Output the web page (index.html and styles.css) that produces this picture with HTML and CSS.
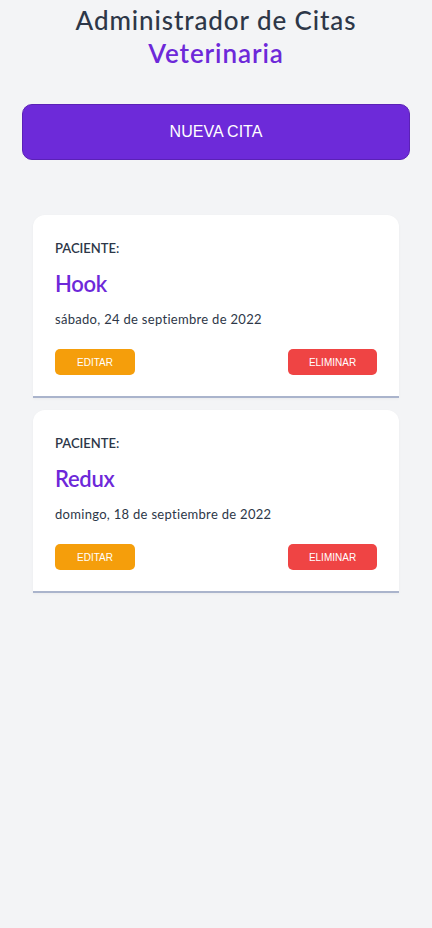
FILE: index.html
```html
<!DOCTYPE html>
<html lang="es">
<head>
<meta charset="utf-8">
<title>Administrador de Citas</title>
<link rel="stylesheet" href="styles.css">
</head>
<body>
<header class="header">
  <h1 class="title">Administrador de Citas <span class="title-accent">Veterinaria</span></h1>
</header>
<main class="main">
  <button class="new-btn" type="button">NUEVA CITA</button>
  <section class="list">
    <article class="card">
      <p class="label">PACIENTE:</p>
      <h2 class="name">Hook</h2>
      <p class="date">sábado, 24 de septiembre de 2022</p>
      <div class="actions">
        <button class="btn btn-edit" type="button">EDITAR</button>
        <button class="btn btn-delete" type="button">ELIMINAR</button>
      </div>
    </article>
    <article class="card">
      <p class="label">PACIENTE:</p>
      <h2 class="name">Redux</h2>
      <p class="date">domingo, 18 de septiembre de 2022</p>
      <div class="actions">
        <button class="btn btn-edit" type="button">EDITAR</button>
        <button class="btn btn-delete" type="button">ELIMINAR</button>
      </div>
    </article>
  </section>
</main>
</body>
</html>
```

FILE: styles.css
```css
* { box-sizing: border-box; }
html, body { margin: 0; padding: 0; }
body {
  background: #f3f4f6;
  font-family: "Lato", "Noto Sans", sans-serif;
  color: #374151;
  min-height: 928px;
}
.header {
  padding-top: 4px;
  text-align: center;
}
.title {
  margin: 0 auto;
  width: 320px;
  font-size: 26px;
  font-weight: 500;
  line-height: 33px;
  letter-spacing: 0.9px;
  color: #2d3748;
}
.title-accent {
  color: #6d28d9;
  font-weight: 600;
}
.main {
  padding: 34px 22px 0;
}
.new-btn {
  display: block;
  width: 100%;
  height: 56px;
  border: 1px solid #5b21b6;
  border-radius: 10px;
  background: #6d2ad9;
  color: #fff;
  font-family: "Liberation Sans", Arial, sans-serif;
  font-size: 16px;
  font-weight: 400;
  cursor: pointer;
}
.list {
  display: flex;
  flex-direction: column;
  gap: 12px;
  margin: 55px 11px 0;
}
.card {
  background: #fff;
  border-radius: 12px 12px 0 0;
  border-bottom: 2px solid #aab4cc;
  padding: 23px 22px 21px;
  box-shadow: 0 1px 3px rgba(0,0,0,0.04);
}
.label {
  margin: 0;
  font-size: 13px;
  line-height: 20px;
  font-weight: 600;
  color: #2d3748;
}
.name {
  margin: 11px 0 0;
  font-size: 22px;
  line-height: 30px;
  font-weight: 600;
  letter-spacing: -0.3px;
  color: #6d28d9;
}
.date {
  margin: 10px 0 0;
  font-size: 13px;
  line-height: 20px;
  letter-spacing: 0.3px;
  color: #2d3748;
}
.actions {
  display: flex;
  justify-content: space-between;
  margin-top: 20px;
}
.btn {
  height: 26px;
  border: none;
  border-radius: 5px;
  color: #fff;
  font-family: "Liberation Sans", Arial, sans-serif;
  font-size: 10px;
  cursor: pointer;
}
.btn-edit { width: 80px; background: #f59e0b; }
.btn-delete { width: 89px; background: #ef4444; }
```
